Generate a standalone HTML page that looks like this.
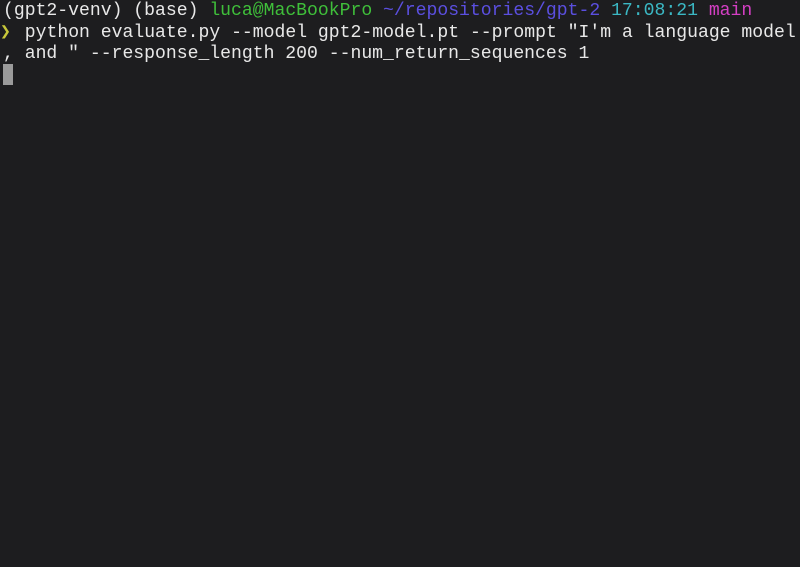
<!DOCTYPE html>
<html><head><style>
html,body{margin:0;padding:0;background:#1d1d1f;width:800px;height:567px;overflow:hidden}
pre{margin:0;position:absolute;left:3px;top:1px;font-family:"Liberation Mono",monospace;font-size:18.1px;line-height:21.5px;color:#e8e8e8;white-space:pre}
.g{color:#3fbf3a}.b{color:#5b4fe0}.c{color:#3bb8c4}.m{color:#d43fc4}.y{color:#c8c83a;position:relative;left:-3px}
.cur{position:absolute;left:3px;top:64px;width:10px;height:21px;background:#9a9a9a}
</style></head><body>
<pre>(gpt2-venv) (base) <span class="g">luca@MacBookPro</span> <span class="b">~/repositories/gpt-2</span> <span class="c">17:08:21</span> <span class="m">main</span>
<span class="y">❯</span> python evaluate.py --model gpt2-model.pt --prompt "I'm a language model
, and " --response_length 200 --num_return_sequences 1</pre>
<div class="cur"></div>
</body></html>
